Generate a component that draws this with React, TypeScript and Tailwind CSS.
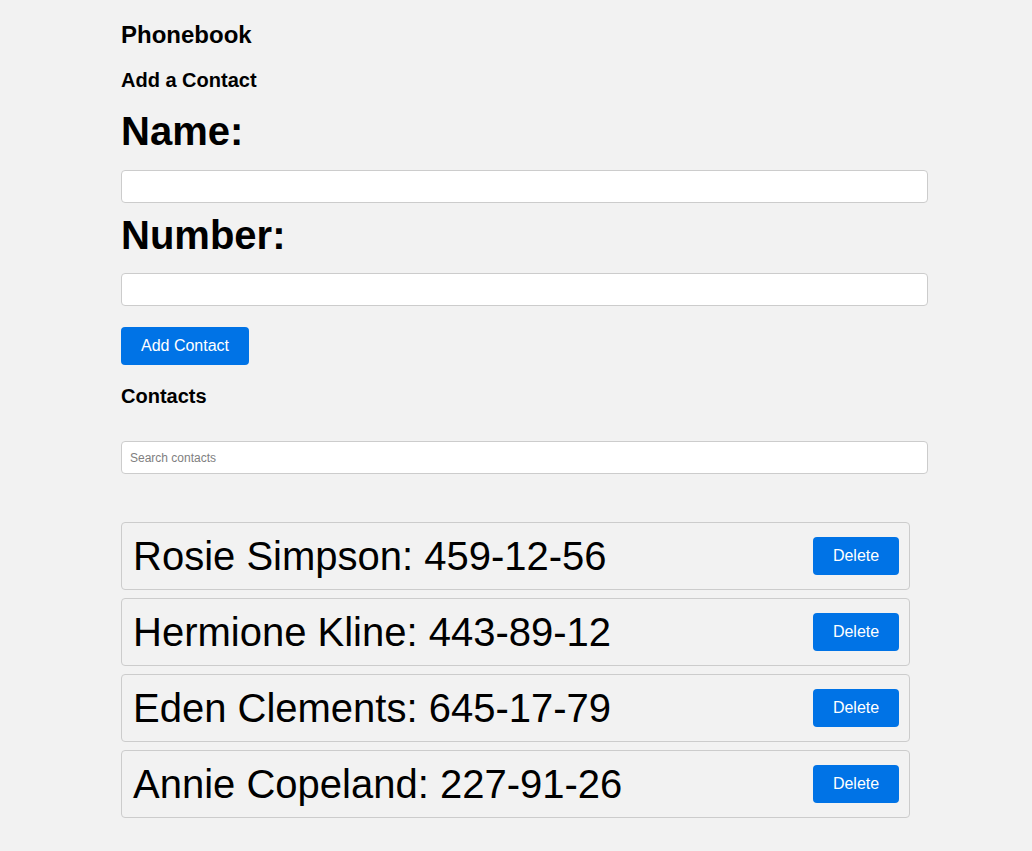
import React, { useState } from 'react';

const App: React.FC = () => {
  const [contacts, setContacts] = useState([
    { id: 1, name: 'Rosie Simpson', number: '459-12-56' },
    { id: 2, name: 'Hermione Kline', number: '443-89-12' },
    { id: 3, name: 'Eden Clements', number: '645-17-79' },
    { id: 4, name: 'Annie Copeland', number: '227-91-26' },
  ]);
  const [filter, setFilter] = useState('');

  const visible = contacts.filter(c => c.name.toLowerCase().includes(filter.toLowerCase()));

  return (
    <div className="min-h-screen bg-[#f2f2f2] text-black font-['Liberation_Sans',Arial,sans-serif]">
      <div className="ml-[121px] w-[807px] pt-[21px] pb-[33px] flex flex-col">
        <h2 className="h-[28px] leading-[28px] text-[24px] font-bold">Phonebook</h2>
        <h3 className="mt-[19px] h-[24px] leading-[24px] text-[20px] font-bold">Add a Contact</h3>

        <label className="mt-[15px] h-[48px] leading-[48px] text-[40px] font-bold">Name:</label>
        <input className="mt-[15px] h-[33px] w-full bg-white border border-[#cccccc] rounded-[4px] px-2 outline-none" />

        <label className="mt-[8px] h-[48px] leading-[48px] text-[40px] font-bold">Number:</label>
        <input className="mt-[14px] h-[33px] w-full bg-white border border-[#cccccc] rounded-[4px] px-2 outline-none" />

        <button className="mt-[21px] h-[38px] w-[128px] bg-[#0073e6] text-white text-[16px] rounded-[4px]">
          Add Contact
        </button>

        <h3 className="mt-[19px] h-[24px] leading-[24px] text-[20px] font-bold">Contacts</h3>

        <input
          value={filter}
          onChange={e => setFilter(e.target.value)}
          placeholder="Search contacts"
          className="mt-[33px] h-[33px] w-full bg-white border border-[#cccccc] rounded-[4px] px-2 text-[12px] placeholder:text-[#808080] outline-none"
        />

        <ul className="mt-[48px] flex flex-col gap-[8px] w-[789px]">
          {visible.map(c => (
            <li
              key={c.id}
              className="h-[68px] border border-[#cccccc] rounded-[4px] pl-[11px] pr-[10px] flex items-center justify-between"
            >
              <span className="text-[40px] leading-[46px]">{c.name}: {c.number}</span>
              <button
                onClick={() => setContacts(contacts.filter(x => x.id !== c.id))}
                className="h-[38px] w-[86px] bg-[#0073e6] text-white text-[16px] rounded-[4px]"
              >
                Delete
              </button>
            </li>
          ))}
        </ul>
      </div>
    </div>
  );
};

export default App;
